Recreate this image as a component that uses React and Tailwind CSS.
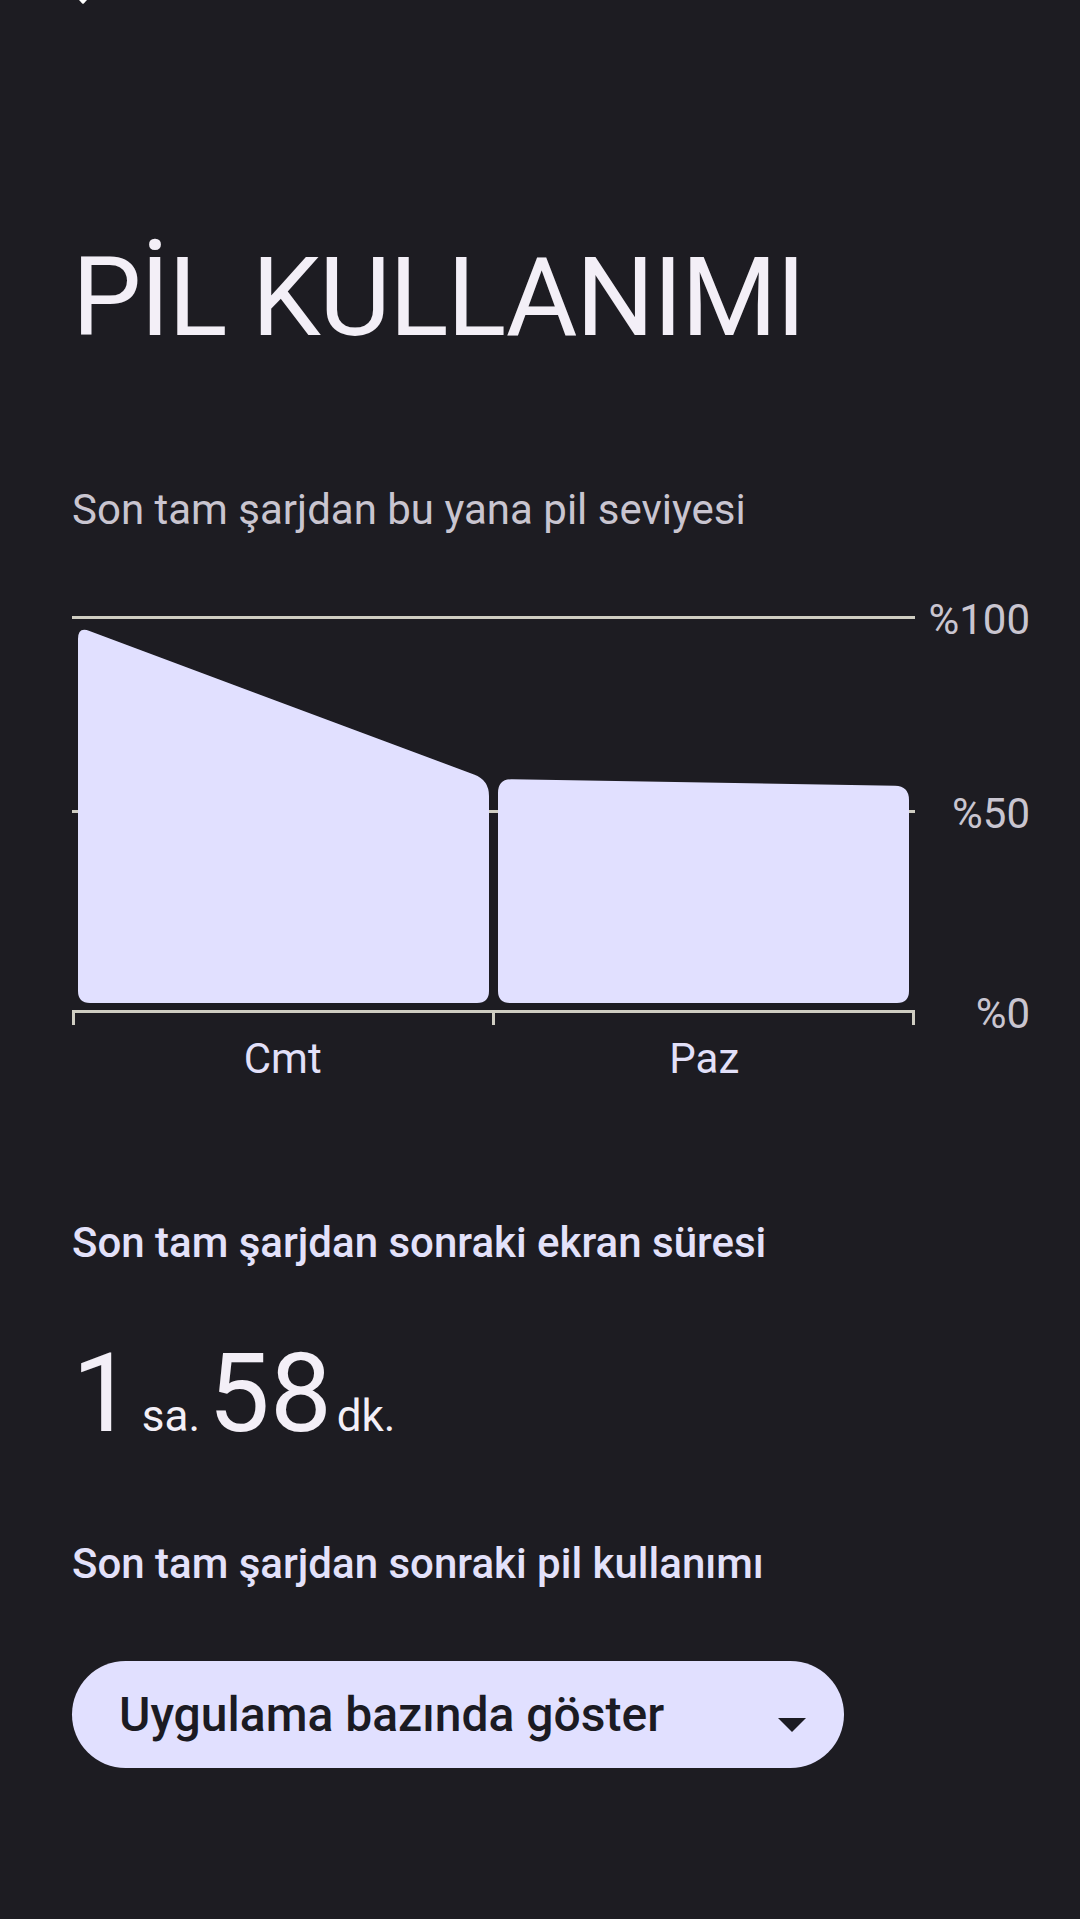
function BackArrowTip() {
  // only the bottom tip of the toolbar back arrow is still on screen
  return (
    <svg width="14" height="4" viewBox="0 0 14 4" className="ml-[4px] block">
      <path d="M3 0h8l-3 3.2a1.4 1.4 0 0 1-2 0z" fill="#ffffff" />
    </svg>
  );
}

function BatteryChart() {
  const line = '#cfcdc2';
  return (
    <div>
      <div className="mt-[65px] flex h-[434px]">
        <svg width="843" height="434" viewBox="72 596 843 434" className="block shrink-0">
          <rect x="72" y="616" width="843" height="3" fill={line} />
          <rect x="72" y="810" width="843" height="3" fill={line} />
          <rect x="72" y="1010" width="843" height="3" fill={line} />
          <rect x="72" y="1010" width="3" height="15" fill={line} />
          <rect x="492" y="1010" width="3" height="15" fill={line} />
          <rect x="912" y="1010" width="3" height="15" fill={line} />
          <path
            d="M78 639 Q78 626.5 89.5 631 L474 774.5 Q489 780 489 796 L489 991 Q489 1003 477 1003 L90 1003 Q78 1003 78 991 Z"
            fill="#e1e0ff"
          />
          <path
            d="M498 793 Q498 779 512 779.3 L895 785.7 Q909 786 909 800 L909 991 Q909 1003 897 1003 L510 1003 Q498 1003 498 991 Z"
            fill="#e1e0ff"
          />
        </svg>
        <div className="flex flex-1 flex-col items-end text-[42px] leading-[42px] text-[#c9c5d0]">
          <span className="mt-[3px]">%100</span>
          <span className="mt-[152px]">%50</span>
          <span className="mt-[158px]">%0</span>
        </div>
      </div>
      <div className="mt-[8px] grid w-[843px] grid-cols-2 text-center text-[42px] leading-[42px] text-[#e2e0f9]">
        <span>Cmt</span>
        <span>Paz</span>
      </div>
    </div>
  );
}

export default function App() {
  return (
    <div className="h-[1919px] w-[1080px] overflow-hidden bg-[#1d1c22] pl-[72px] pr-[50px] font-['Roboto',sans-serif]">
      <BackArrowTip />

      <h1 className="mt-[239px] text-[110px] font-normal leading-[110px] tracking-[-1.5px] text-[#f3eff7]">
        PİL KULLANIMI
      </h1>

      <p className="mt-[136px] text-[42px] leading-[42px] text-[#c9c5d0]">Son tam şarjdan bu yana pil seviyesi</p>

      <BatteryChart />

      <h2 className="mt-[142px] text-[42px] font-medium leading-[42px] text-[#e3e1fa]">
        Son tam şarjdan sonraki ekran süresi
      </h2>

      <div className="mt-[75px] flex h-[110px] items-baseline leading-[110px] text-[#f3eff7]">
        <span className="text-[110px]">1</span>
        <span className="ml-[8px] text-[44px]">sa.</span>
        <span className="ml-[8px] text-[110px]">58</span>
        <span className="ml-[5px] text-[44px]">dk.</span>
      </div>

      <h2 className="mt-[94px] text-[42px] font-medium leading-[42px] text-[#e3e1fa]">
        Son tam şarjdan sonraki pil kullanımı
      </h2>

      <button className="mt-[76px] flex h-[107px] w-[772px] items-center justify-between rounded-full bg-[#e1e0ff] pl-[47px] pr-[38px] text-left">
        <span className="text-[48px] font-medium leading-[48px] text-[#1b1b23]">Uygulama bazında göster</span>
        <svg width="28" height="14" viewBox="0 0 28 14" className="mt-[20px] block">
          <path d="M0 0h28L14 14z" fill="#1b1b23" />
        </svg>
      </button>
    </div>
  );
}
